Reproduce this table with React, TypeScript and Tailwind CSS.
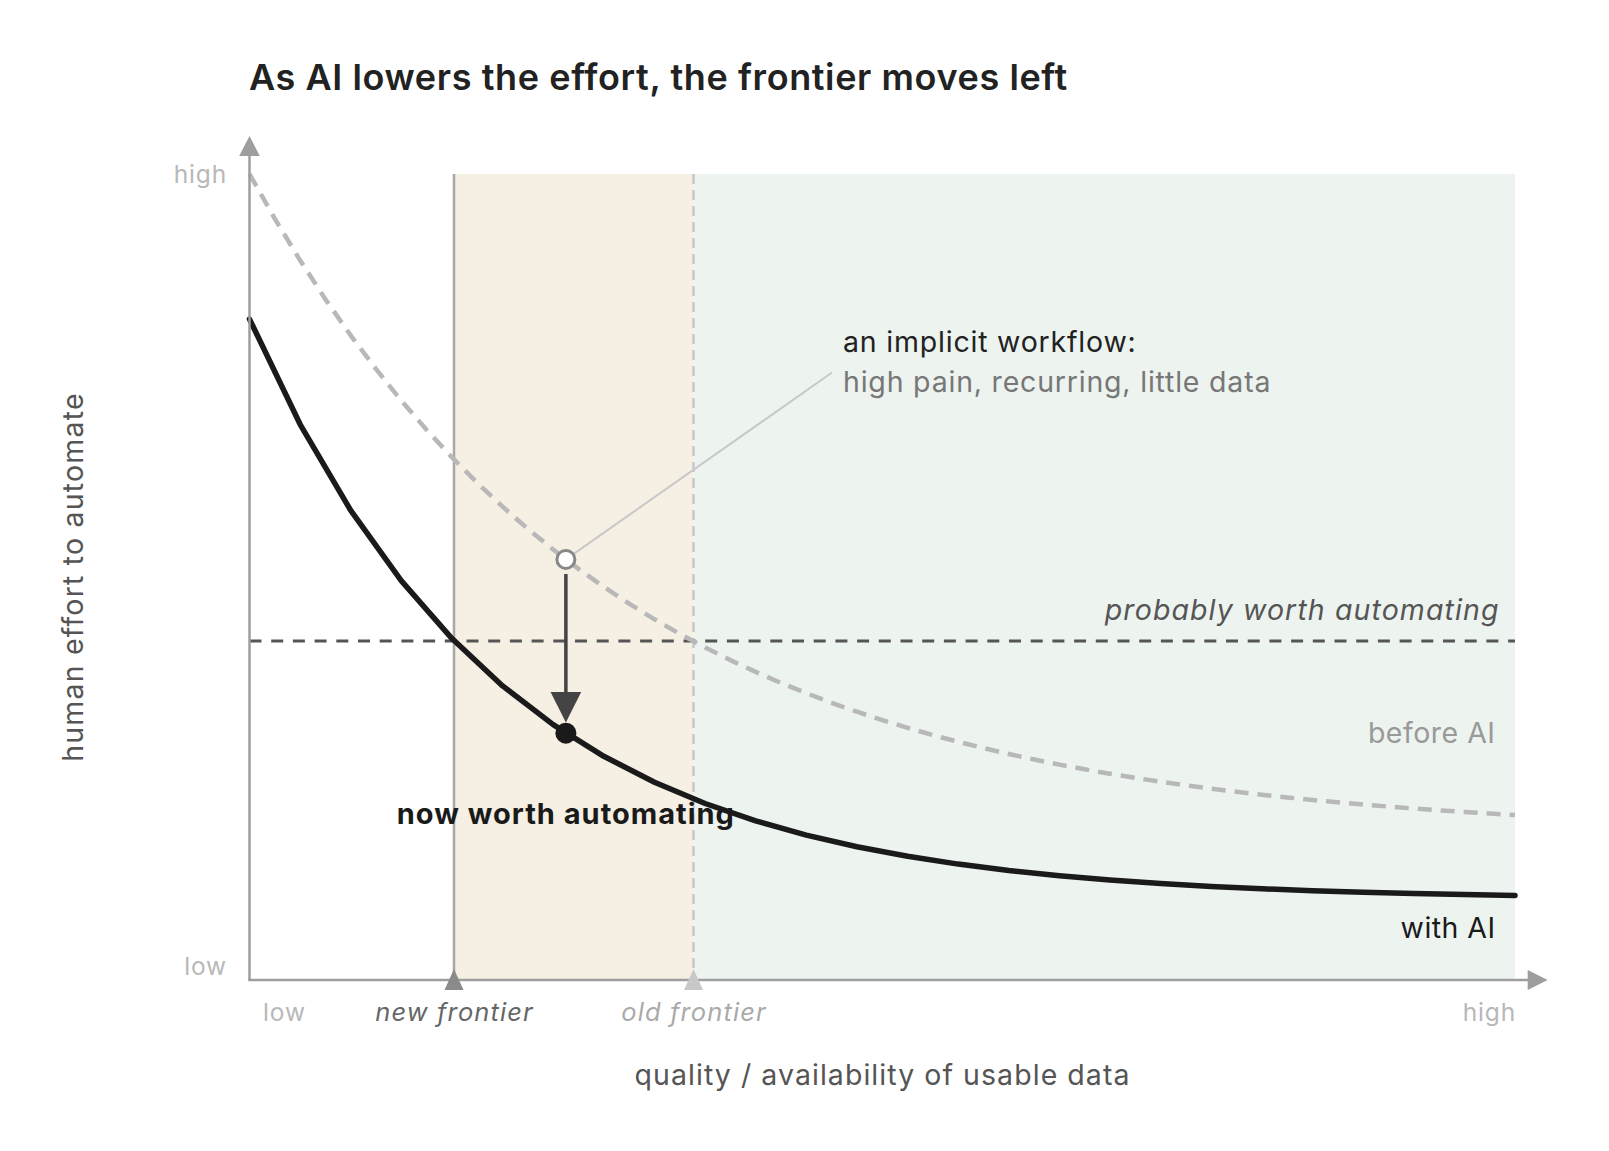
const X0 = 249.5;
const X1 = 1515;
const Y0 = 980;
const Y1 = 174;

function px(t: number) {
  return X0 + t * (X1 - X0);
}

function py(v: number) {
  return Y0 - v * (Y0 - Y1);
}

function withAi(t: number) {
  return 0.1 + 0.72 * Math.exp(-5 * t);
}

function beforeAi(t: number) {
  return 0.18 + 0.82 * Math.exp(-3.5 * t);
}

function points(fn: (t: number) => number, step: number) {
  const out: string[] = [];
  for (let i = 0; i <= Math.round(1 / step); i++) {
    const t = i * step;
    out.push(`${px(t).toFixed(1)},${py(fn(t)).toFixed(1)}`);
  }
  return out.join(" ");
}

const font = "Inter, 'Noto Sans', sans-serif";

export default function App() {
  const newX = 454;
  const oldX = 693.5;
  const threshold = 641;

  const dotX = px(0.25);
  const openY = py(beforeAi(0.25));
  const dotY = py(withAi(0.25));

  return (
    <div className="w-[1609px] h-[1151px] bg-white overflow-hidden">
      <div className="h-[110px] pt-[57px] pl-[249px]">
        <h1 className="text-[36px] leading-[40px] font-semibold tracking-[0.6px] text-[#222222] font-['Inter',sans-serif]">
          As AI lowers the effort, the frontier moves left
        </h1>
      </div>

      <svg
        width="1609"
        height="1041"
        viewBox="0 110 1609 1041"
        className="block"
        fontFamily={font}
      >
        {/* zones */}
        <rect x={newX} y={Y1} width={oldX - newX} height={Y0 - Y1} fill="#f6efe3" />
        <rect x={oldX} y={Y1} width={X1 - oldX} height={Y0 - Y1} fill="#edf3ef" />

        {/* frontiers */}
        <line x1={newX} y1={Y1} x2={newX} y2={Y0} stroke="#a8a8a8" strokeWidth="2.5" />
        <line
          x1={oldX}
          y1={Y1}
          x2={oldX}
          y2={Y0}
          stroke="#c8c8c8"
          strokeWidth="2.5"
          strokeDasharray="10 6"
        />

        {/* worth automating threshold */}
        <line
          x1={X0}
          y1={threshold}
          x2={X1}
          y2={threshold}
          stroke="#555555"
          strokeWidth="3"
          strokeDasharray="12 9.7"
        />

        {/* curves */}
        <polyline
          points={points(beforeAi, 0.02)}
          fill="none"
          stroke="#b8b8b8"
          strokeWidth="4.5"
          strokeDasharray="14 9"
        />
        <polyline
          points={points(withAi, 0.04)}
          fill="none"
          stroke="#1a1a1a"
          strokeWidth="5.5"
          strokeLinejoin="round"
          strokeLinecap="round"
        />

        {/* axes */}
        <line x1={X0} y1={Y0} x2={X0} y2={155} stroke="#9e9e9e" strokeWidth="2.5" />
        <polygon points={`${X0 - 10.3},156 ${X0 + 10.3},156 ${X0},136`} fill="#9e9e9e" />
        <line x1={X0 - 1.25} y1={Y0} x2={1529} y2={Y0} stroke="#9e9e9e" strokeWidth="2.5" />
        <polygon points={`1527.7,970 1527.7,990 1547.7,980`} fill="#9e9e9e" />

        {/* frontier markers */}
        <polygon points={`${newX - 9.5},990 ${newX + 9.5},990 ${newX},969`} fill="#8a8a8a" />
        <polygon points={`${oldX - 9.5},990 ${oldX + 9.5},990 ${oldX},969`} fill="#c8c8c8" />

        {/* drop arrow */}
        <line x1={dotX} y1={574} x2={dotX} y2={694} stroke="#444444" strokeWidth="3.5" />
        <polygon
          points={`${dotX - 15.3},692 ${dotX + 15.3},692 ${dotX},722.5`}
          fill="#444444"
        />

        {/* callout */}
        <line x1={dotX} y1={openY} x2={832} y2={372.5} stroke="#c8c8c8" strokeWidth="2" />
        <circle cx={dotX} cy={openY} r="9" fill="#ffffff" stroke="#888888" strokeWidth="3" />
        <circle cx={dotX} cy={dotY} r="10.5" fill="#1a1a1a" />

        {/* tick labels */}
        <g fontSize="24.5" letterSpacing="0.85" fill="#b8b8b8">
          <text x="227" y="183" textAnchor="end">
            high
          </text>
          <text x="227" y="975" textAnchor="end">
            low
          </text>
          <text x="263" y="1021">
            low
          </text>
          <text x={X1 + 1} y="1021" textAnchor="end">
            high
          </text>
        </g>
        <g fontSize="25.5" letterSpacing="1.1" fontStyle="italic">
          <text x={newX + 0.5} y="1021" textAnchor="middle" fill="#666666">
            new frontier
          </text>
          <text x={oldX + 0.5} y="1021" textAnchor="middle" fill="#aaaaaa">
            old frontier
          </text>
        </g>

        {/* axis titles */}
        <text
          x="882.5"
          y="1085"
          textAnchor="middle"
          fontSize="28.5"
          letterSpacing="1.05"
          fill="#555555"
        >
          quality / availability of usable data
        </text>
        <text
          x="83"
          y="577"
          textAnchor="middle"
          fontSize="28.5"
          letterSpacing="1.2"
          fill="#555555"
          transform="rotate(-90 83 577)"
        >
          human effort to automate
        </text>

        {/* annotations */}
        <g fontSize="28.5" letterSpacing="0.8">
          <text x="843" y="352" fill="#222222">
            an implicit workflow:
          </text>
          <text x="843" y="392" fill="#777777">
            high pain, recurring, little data
          </text>
        </g>
        <text
          x="1499.5"
          y="620"
          textAnchor="end"
          fontSize="28.5"
          letterSpacing="1.1"
          fontStyle="italic"
          fill="#555555"
        >
          probably worth automating
        </text>
        <text x="1495.5" y="743" textAnchor="end" fontSize="28.5" letterSpacing="0.5" fill="#999999">
          before AI
        </text>
        <text x="1495.5" y="938" textAnchor="end" fontSize="28.5" letterSpacing="0.45" fill="#1a1a1a">
          with AI
        </text>
        <text
          x={dotX}
          y="824"
          textAnchor="middle"
          fontSize="29"
          letterSpacing="1"
          fontWeight="700"
          fill="#1a1a1a"
        >
          now worth automating
        </text>
      </svg>
    </div>
  );
}
